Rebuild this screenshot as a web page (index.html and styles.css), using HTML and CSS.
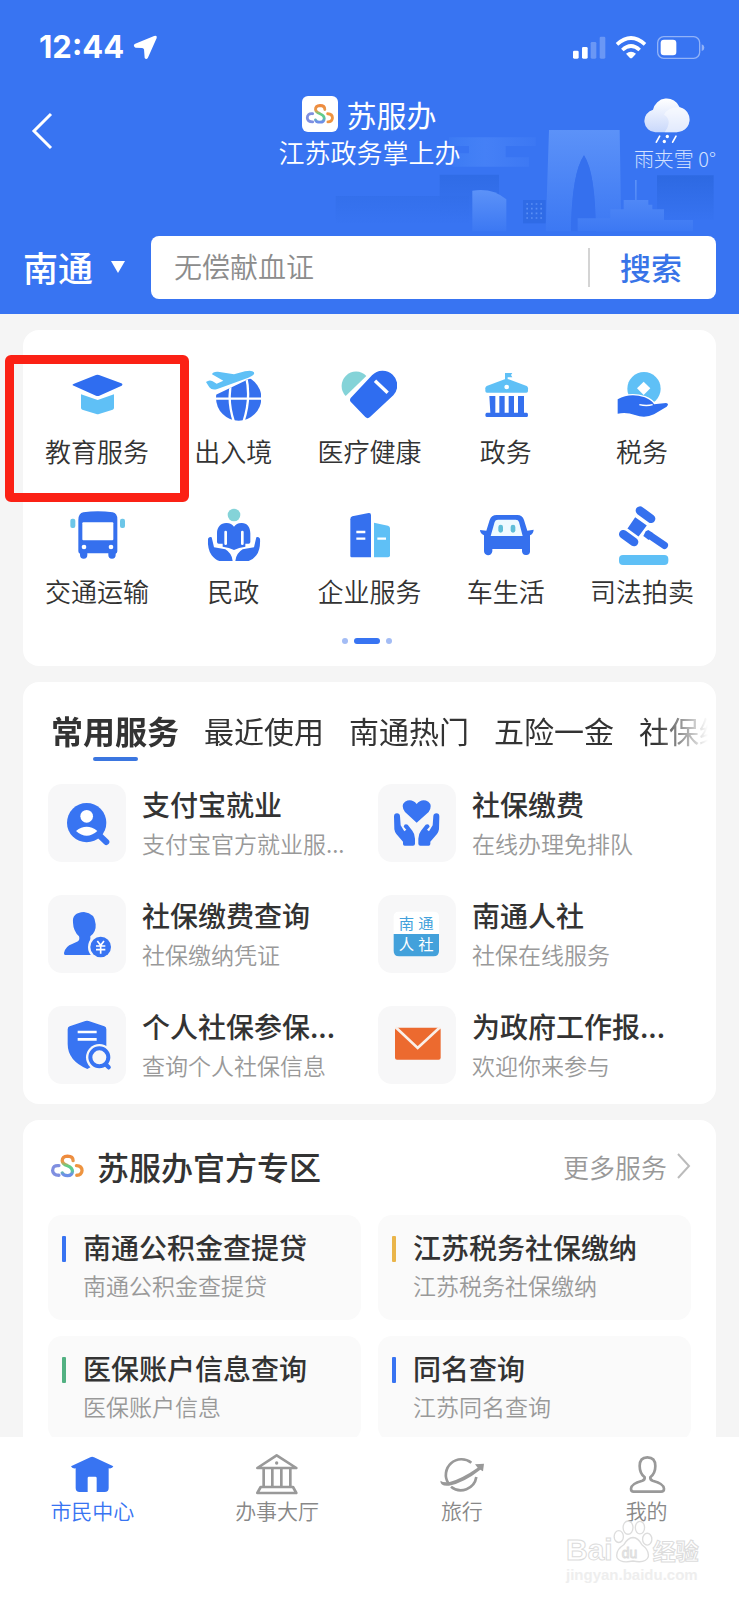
FILE: index.html
```html
<!DOCTYPE html>
<html lang="zh-CN">
<head>
<meta charset="utf-8">
<meta name="viewport" content="width=device-width, initial-scale=1">
<title>苏服办</title>
<link rel="stylesheet" href="styles.css">
</head>
<body>
<svg class="defs" width="0" height="0" aria-hidden="true">
  <defs>
    <linearGradient id="sGrad" gradientUnits="userSpaceOnUse" x1="0" y1="134" x2="0" y2="198">
      <stop offset="0" stop-color="#f0883a"/><stop offset=".3" stop-color="#e59a4c"/><stop offset=".5" stop-color="#5fcf86"/><stop offset=".72" stop-color="#5cc79a"/><stop offset=".9" stop-color="#6d8fe8"/>
    </linearGradient>
    <symbol id="logo" viewBox="150 128 106 76">
      <g fill="none" stroke-width="10" stroke-linecap="round">
        <path d="M177 165Q158 163 158 180Q159 194 177 194" stroke="#7f8fe0"/>
        <path d="M230 165Q247 166 247 180Q246 194 231 194" stroke="#ee9440"/>
        <path d="M220 150Q220 136 203 136Q187 137 187 150Q188 160 203 165Q218 171 218 182Q217 195 203 195Q190 195 187 187" stroke="url(#sGrad)"/>
      </g>
    </symbol>
  </defs>
</svg>
<div class="app">
  <main class="scroll">
    <header class="header">
      <svg class="skyline" viewBox="-117 390 1158 318" aria-hidden="true">
        <defs>
          <linearGradient id="b1" x1="0" y1="0" x2="0" y2="1"><stop offset="0" stop-color="#5c92f8"/><stop offset="1" stop-color="#3c78f3"/></linearGradient>
          <linearGradient id="b2" x1="0" y1="0" x2="0" y2="1"><stop offset="0" stop-color="#2d69e2"/><stop offset="1" stop-color="#3773f1"/></linearGradient>
          <linearGradient id="b3" x1="0" y1="0" x2="1" y2="0"><stop offset="0" stop-color="#478af8" stop-opacity="0"/><stop offset=".5" stop-color="#4580f6"/><stop offset="1" stop-color="#4580f6" stop-opacity=".3"/></linearGradient>
        </defs>
        <path d="M240 412H500V438H410V472H480V500H250V486H200V460H300V438H240Z" fill="url(#b3)"/>
        <path d="M-100 588H300V670H-100Z" fill="url(#b2)" opacity=".4"/>
        <path d="M212 524H390V660H212Z" fill="url(#b2)" opacity=".75"/>
        <path d="M310 572Q370 562 412 598V694H310Z" fill="url(#b1)"/>
        <path d="M462 600H530V670H462Z" fill="#2f6be6"/>
        <path d="M472 612H526M472 626H526M472 640H526M472 654H526" stroke="#5a8ff5" stroke-width="5" stroke-dasharray="5 9"/>
        <path d="M864 526H1034V660H864Z" fill="url(#b2)"/>
        <path d="M540 390H752L757 694H680Q680 520 645 466Q608 520 606 694H530Z" fill="url(#b1)"/>
        <path d="M645 466Q680 520 680 694H606Q608 520 645 466Z" fill="#3570ee"/>
        <path d="M626 655H724V628H764V600H798V540H803V600H838V614H850V628H885V660H972V694H626Z" fill="url(#b1)"/>
      </svg>
      <div class="status">
        <div class="clock"><span>12:44</span>
          <svg class="nav-arrow" viewBox="390 100 80 80" aria-hidden="true"><path d="M396 137Q394 133 400 130L458 106Q468 103 466 112L439 173Q434 180 429 174L427 148Q426 144 421 143L401 142Q397 141 396 137Z" fill="#fff"/></svg>
        </div>
        <svg class="status-icons" viewBox="606 96 402 84" aria-label="信号、无线网络与电量">
          <rect x="612" y="149" width="17" height="24" rx="4" fill="#fff"/><rect x="639" y="138" width="17" height="35" rx="4" fill="#fff"/>
          <rect x="665" y="123" width="17" height="50" rx="4" fill="#fff" opacity=".25"/><rect x="692" y="107" width="17" height="66" rx="4" fill="#fff" opacity=".25"/>
          <g fill="none" stroke="#fff" stroke-width="11"><path d="M744 130Q786 92 828 130"/><path d="M760 147Q786 123 812 147"/></g>
          <path d="M771 158Q786 146 801 158L790 170Q786 174 782 170Z" fill="#fff"/>
          <rect x="866" y="107" width="126" height="65" rx="18" fill="none" stroke="#fff" stroke-opacity=".45" stroke-width="4"/>
          <rect x="875" y="116" width="47" height="47" rx="10" fill="#fff"/><path d="M998 130Q1006 132 1006 140Q1006 148 998 150Z" fill="#fff" opacity=".45"/>
        </svg>
      </div>
      <div class="brand-row">
        <button class="back" type="button" aria-label="返回"><svg viewBox="0 0 22 38"><path d="M20 2L3 19L20 36" fill="none" stroke="#fff" stroke-width="3"/></svg></button>
        <div class="brand">
          <h1 class="brand-name"><span class="brand-tile"><svg><use href="#logo"/></svg></span>苏服办</h1>
          <p class="slogan">江苏政务掌上办</p>
        </div>
        <div class="weather">
          <svg viewBox="822 288 144 146" aria-hidden="true">
            <defs><linearGradient id="cl" x1="0" y1="0" x2="0" y2="1"><stop offset="0" stop-color="#fff"/><stop offset="1" stop-color="#c9d8fb"/></linearGradient></defs>
            <path d="M862 396a34 34 0 0 1-7-67a42 42 0 0 1 80-8a38 38 0 0 1-10 75Z" fill="url(#cl)"/>
            <path d="M888 344Q898 320 935 321a38 38 0 0 1-10 75H890Q915 360 888 344Z" fill="#fff" opacity=".45"/>
            <g stroke="#fff" stroke-width="5" stroke-linecap="round"><path d="M875 408L865 426M924 408L914 426"/></g>
            <circle cx="898" cy="409" r="5" fill="#fff"/><circle cx="889" cy="424" r="5" fill="#fff"/>
          </svg>
          <span>雨夹雪 0°</span>
        </div>
      </div>
      <form class="search-row">
        <button class="city" type="button">南通<svg viewBox="0 0 14 12" aria-hidden="true"><path d="M0 0H14L7 12Z" fill="#fff"/></svg></button>
        <div class="search">
          <input type="search" aria-label="搜索服务" placeholder="无偿献血证">
          <button class="search-btn" type="button">搜索</button>
        </div>
      </form>
    </header>

    <section class="card services" aria-label="服务分类">
      <div class="grid">
        <a class="cell highlighted" href="#"><svg viewBox="207 84 168 168"><path d="M218 136Q216 133 222 131L288 105Q292 103 297 105L364 130Q370 133 365 137L298 167Q293 169 288 167Z" fill="#2f6df0"/><path d="M243 163L293 180L342 163V203Q342 207 338 209L297 222Q293 224 289 222L247 209Q243 207 243 203Z" fill="#5fc0f6"/></svg><span>教育服务</span></a>
        <a class="cell" href="#"><svg viewBox="615 84 168 168"><clipPath id="gc"><path d="M640 168L745 118L800 100V260H640Z"/></clipPath><g clip-path="url(#gc)"><circle cx="716" cy="174" r="68" fill="#3570ee"/><g fill="none" stroke="#fff" stroke-width="7"><path d="M640 176H790M738 108Q754 175 730 246M698 108Q678 175 702 246"/></g></g><path d="M618 126Q628 118 638 124L650 131L670 122L636 103Q638 94 654 95L702 103L735 94Q756 89 762 97Q766 106 745 113L652 147Q636 152 628 142Z" fill="#5fc0f6"/></svg><span>出入境</span></a>
        <a class="cell" href="#"><svg viewBox="1023 84 168 168"><path d="M1037 168A42 42 0 1 1 1099 108Z" fill="#84d3d8"/><path d="M1052 185Q1048 180 1052 174L1116 106A43 43 0 0 1 1180 166L1110 231Q1103 238 1096 231Z" fill="#2f6df0"/><path d="M1125 122L1163 158" stroke="#fff" stroke-width="10"/></svg><span>医疗健康</span></a>
        <a class="cell" href="#"><svg viewBox="324 84 168 168"><path d="M405 99H427L423 105L427 112H413V121H405Z" fill="#5fc0f6"/><path d="M350 138L404 118Q410 116 416 118L470 138Q474 140 474 145V153Q474 158 469 158H351Q346 158 346 153V145Q346 140 350 138Z" fill="#5fc0f6"/><circle cx="410" cy="141" r="7" fill="#fff"/><path d="M358 168H376V218H388V168H404V218H416V168H432V218H444V168H462V218H470Q474 218 474 225T470 231H350Q346 231 346 225T350 218H361Z" fill="#3570ee"/></svg><span>政务</span></a>
        <a class="cell" href="#"><svg viewBox="732 84 168 168"><circle cx="822" cy="146" r="50" fill="#5fc0f6"/><path d="M821 125L841 145L821 165L801 145Z" fill="#fff"/><path d="M743 178Q780 157 824 172Q848 182 852 193L888 189Q899 191 890 200L852 223Q825 236 795 225Q770 216 743 221Z" fill="#2f6df0" stroke="#fff" stroke-width="8" paint-order="stroke"/><path d="M808 194Q830 199 848 194" fill="none" stroke="#fff" stroke-width="4"/></svg><span>税务</span></a>
        <a class="cell" href="#"><svg viewBox="207 504 168 168"><path d="M235 540Q235 520 250 517Q293 510 338 517Q352 520 352 538V634Q352 640 347 641V645a11 11 0 0 1-22 0V640H262V645a11 11 0 0 1-22 0V641Q235 640 235 634Z" fill="#3570ee"/><rect x="247" y="547" width="93" height="54" rx="3" fill="#fff"/><circle cx="252" cy="621" r="7" fill="#fff"/><circle cx="333" cy="621" r="7" fill="#fff"/><rect x="211" y="536" width="15" height="28" rx="6" fill="#6cc6e8"/><rect x="360" y="536" width="15" height="28" rx="6" fill="#6cc6e8"/></svg><span>交通运输</span></a>
        <a class="cell" href="#"><svg viewBox="615 504 168 168"><circle cx="702" cy="525" r="19" fill="#84d3d8"/><path d="M651 606V580C651 560 664 548 680 549Q695 550 702 560Q709 550 724 549C740 548 751 560 751 580V606Q751 611 746 611H736V620Q716 622 702 630Q688 622 668 620V611H656Q651 611 651 606Z" fill="#3570ee"/><path d="M677 576V611M727 576V611" stroke="#fff" stroke-width="8" stroke-linecap="round"/><g id="palm"><path d="M624 596Q628 588 635 592L642 622L676 628Q696 640 698 663H658Q646 660 635 646Q622 628 624 596Z" fill="#3570ee"/></g><use href="#palm" transform="matrix(-1 0 0 1 1404 0)"/></svg><span>民政</span></a>
        <a class="cell" href="#"><svg viewBox="1023 504 168 168"><path d="M1051 538Q1051 531 1057 529L1106 519Q1113 518 1113 526V652H1055Q1051 652 1051 648Z" fill="#3570ee"/><path d="M1122 548L1164 557Q1170 559 1170 565V646Q1170 652 1164 652H1122Z" fill="#5fc0f6"/><path d="M1069 576H1096M1069 596H1096M1132 596H1158" stroke="#fff" stroke-width="7"/></svg><span>企业服务</span></a>
        <a class="cell" href="#"><svg viewBox="324 504 168 168"><path d="M330 570L349 572L359 540Q364 525 380 525H442Q457 525 462 540L472 572L491 569Q490 582 480 586V632a12 12 0 0 1-24 2V627H367V634a12 12 0 0 1-25-2V586Q330 580 330 570Z" fill="#3570ee"/><path d="M374 546Q376 539 384 539H437Q445 539 447 546L458 588H362Z" fill="#eefaff"/><rect x="385" y="554" width="14" height="24" rx="7" fill="#5fbdd8"/><rect x="422" y="554" width="14" height="24" rx="7" fill="#5fbdd8"/></svg><span>车生活</span></a>
        <a class="cell" href="#"><svg class="gavel" viewBox="732 504 168 168"><g stroke="#3570ee" fill="none" stroke-width="26" stroke-linecap="round"><path d="M810 512L843 536M760 583L792 606"/><path d="M842 588L883 616" stroke-width="22"/></g><path d="M827 574L820 588L836 600L850 580L835 570Z" fill="#3570ee"/><path d="M795 528L834 556L806 593L769 566Z" fill="#3570ee" stroke="#fff" stroke-width="5"/><rect x="747" y="645" width="148" height="30" rx="12" fill="#5fc0f6"/></svg><span>司法拍卖</span></a>
      </div>
      <div class="dots"><i></i><i class="on"></i><i></i></div>
    </section>

    <section class="card common">
      <nav class="tabs" aria-label="服务分组">
        <a class="tab active" href="#">常用服务</a><a class="tab" href="#">最近使用</a><a class="tab" href="#">南通热门</a><a class="tab" href="#">五险一金</a><a class="tab" href="#">社保缴</a>
      </nav>
      <div class="list">
        <a class="item" href="#"><svg viewBox="144 312 234 234"><circle cx="260" cy="428" r="59" fill="#3874f2"/><circle cx="260" cy="409" r="19" fill="#fff"/><path d="M228 453Q260 428 292 453Q260 482 228 453Z" fill="#fff"/><path d="M300 468L319 486" stroke="#3874f2" stroke-width="18" stroke-linecap="round"/></svg><span class="txt"><b>支付宝就业</b><small>支付宝官方就业服...</small></span></a>
        <a class="item" href="#"><svg viewBox="27 312 234 234"><path d="M143 428L108 396Q94 376 108 365Q128 354 143 372Q158 354 178 365Q192 376 179 396Z" fill="#3874f2"/><g id="hold"><path d="M75 410Q75 400 84 400Q92 400 93 408L95 436L106 454L112 449L104 440Q106 430 116 434L130 452Q138 462 138 476V491Q138 497 132 497H107Q102 497 102 492V485L82 462Q77 455 76 448Z" fill="#3874f2"/></g><use href="#hold" transform="matrix(-1 0 0 1 286 0)"/></svg><span class="txt"><b>社保缴费</b><small>在线办理免排队</small></span></a>
        <a class="item" href="#"><svg viewBox="144 644 234 234"><path d="M219 727Q215 697 252 695Q285 698 287 732Q289 755 271 768V782L290 800V824H196Q191 824 192 818Q195 798 218 790L234 783Q240 778 237 768Q220 752 219 727Z" fill="#3874f2"/><circle cx="302" cy="800" r="38" fill="#f7f7f8"/><circle cx="302" cy="800" r="31" fill="#3874f2"/><path d="M292 782L302 795L312 782M302 795V820M288 797H316M288 808H316" fill="none" stroke="#fff" stroke-width="5"/></svg><span class="txt"><b>社保缴费查询</b><small>社保缴纳凭证</small></span></a>
        <a class="item" href="#"><svg class="nantong" viewBox="27 644 234 234"><rect x="74" y="694" width="136" height="134" rx="14" fill="#fff"/><path d="M74 761H210V812Q210 828 194 828H90Q74 828 74 812Z" fill="#43a1db"/><text x="89" y="747" fill="#43a1db">南</text><text x="148" y="747" fill="#43a1db">通</text><text x="89" y="809" fill="#fff">人</text><text x="148" y="809" fill="#fff">社</text></svg><span class="txt"><b>南通人社</b><small>社保在线服务</small></span></a>
        <a class="item" href="#"><svg viewBox="144 976 234 234"><path d="M203 1046Q203 1039 209 1037L256 1021Q261 1019 266 1021L313 1037Q319 1039 319 1046V1096Q310 1140 262 1165Q203 1140 203 1090Z" fill="#3874f2"/><path d="M233 1054H290M233 1076H290" stroke="#fff" stroke-width="8"/><circle cx="298" cy="1130" r="40" fill="#f7f7f8"/><path d="M316 1150L326 1160" stroke="#3874f2" stroke-width="13" stroke-linecap="round"/><circle cx="298" cy="1130" r="27" fill="#f7f7f8" stroke="#3874f2" stroke-width="12"/></svg><span class="txt"><b>个人社保参保...</b><small>查询个人社保信息</small></span></a>
        <a class="item" href="#"><svg viewBox="27 976 234 234"><rect x="78" y="1041" width="137" height="96" rx="6" fill="#ec6a2f"/><path d="M80 1040L146 1102L213 1040" fill="none" stroke="#f9efe9" stroke-width="8"/></svg><span class="txt"><b>为政府工作报...</b><small>欢迎你来参与</small></span></a>
      </div>
    </section>

    <section class="card zone">
      <div class="zone-head">
        <svg class="zone-logo" aria-hidden="true"><use href="#logo"/></svg>
        <h2>苏服办官方专区</h2>
        <a class="more" href="#">更多服务<svg viewBox="0 0 14 26" aria-hidden="true"><path d="M1 1L12 13L1 25" fill="none" stroke="#bbb" stroke-width="2"/></svg></a>
      </div>
      <div class="tiles">
        <a class="tile blue" href="#"><b>南通公积金查提贷</b><small>南通公积金查提贷</small></a>
        <a class="tile yellow" href="#"><b>江苏税务社保缴纳</b><small>江苏税务社保缴纳</small></a>
        <a class="tile green" href="#"><b>医保账户信息查询</b><small>医保账户信息</small></a>
        <a class="tile blue" href="#"><b>同名查询</b><small>江苏同名查询</small></a>
      </div>
    </section>
  </main>

  <nav class="tabbar" aria-label="主导航">
    <a class="nav-item current" href="#"><svg viewBox="211 66 132 132"><path d="M272 82Q277 79 283 82L341 109Q338 117 327 115V174Q327 186 315 186H291V144Q291 140 287 140H268Q264 140 264 144V186H240Q228 186 228 174V115Q217 117 214 109Z" fill="#3874f2"/></svg>市民中心</a>
    <a class="nav-item" href="#"><svg viewBox="765 66 132 132"><g fill="none" stroke="#999" stroke-width="8" stroke-linejoin="round"><path d="M772 114L830 76L889 114Z"/><path d="M791 117V170M817 117V170M844 117V170M871 117V170"/><path d="M782 171H879L889 189H772Z"/></g><circle cx="830" cy="99" r="5" fill="#999"/></svg>办事大厅</a>
    <a class="nav-item" href="#"><svg viewBox="213 66 132 132"><g fill="none" stroke="#999" stroke-width="8"><path d="M307 98A47 47 0 0 0 238 160M246 170A47 47 0 0 0 322 141"/></g><path d="M214 152Q222 158 242 156Q280 145 326 113L318 103L345 101L342 124L334 119Q285 158 240 167Q214 170 214 152Z" fill="#999"/></svg>旅行</a>
    <a class="nav-item" href="#"><svg viewBox="767 66 132 132"><path d="M826 142Q811 130 811 108Q811 82 834 82Q858 82 858 108Q858 130 843 142Q842 149 850 152Q884 161 884 176Q884 185 875 185H793Q785 185 785 176Q785 161 819 152Q827 149 826 142Z" fill="none" stroke="#999" stroke-width="8"/></svg>我的</a>
    <div class="watermark">
      <div class="wm-top"><span>Bai</span><svg viewBox="728 270 120 130"><g fill="#fff" stroke="#ddd" stroke-width="4"><ellipse cx="745" cy="320" rx="14" ry="18"/><ellipse cx="773" cy="293" rx="15" ry="20"/><ellipse cx="809" cy="293" rx="14" ry="19"/><ellipse cx="831" cy="328" rx="14" ry="18"/><path d="M788 323Q804 324 815 345Q838 362 834 382Q826 402 788 394Q750 402 740 384Q734 362 760 345Q772 324 788 323Z"/></g><text x="754" y="385">du</text></svg><span class="wm-cn">经验</span></div>
      <div class="wm-url">jingyan.baidu.com</div>
    </div>
  </nav>
</div>
</body>
</html>
```
FILE: styles.css
```css
* { box-sizing: border-box; }
body {
  margin: 0;
  background: #f5f5f5;
  color: #333;
  font-family: "Noto Sans CJK SC", sans-serif;
}
h1, h2, p { margin: 0; }
a { color: inherit; text-decoration: none; }
button {
  padding: 0;
  border: 0;
  background: none;
  color: inherit;
  font: inherit;
  cursor: pointer;
}
svg { display: block; flex: none; }
.defs { position: absolute; }

.app { display: flex; flex-direction: column; height: 100vh; }
.scroll {
  flex: 1;
  min-height: 0;
  overflow-y: auto;
  scrollbar-width: none;
}

/* Header */
.header {
  position: relative;
  padding: 30px 23px 15px;
  background: #3874f2;
  color: #fff;
}
.skyline { position: absolute; right: 23px; top: 130px; width: 386px; height: 106px; }
.status {
  display: flex;
  align-items: center;
  justify-content: space-between;
  height: 34px;
  padding: 0 11px 0 16px;
}
.clock {
  display: flex;
  align-items: center;
  gap: 8px;
  font: 700 31px/34px Inter, sans-serif;
}
.nav-arrow { width: 26px; height: 26px; }
.status-icons { width: 134px; height: 28px; }
.brand-row {
  position: relative;
  display: grid;
  grid-template-columns: 1fr auto 1fr;
  height: 172px;
  padding-top: 32px;
}
.back { align-self: start; justify-self: start; margin: 16px 0 0 8px; }
.back svg { width: 22px; height: 38px; }
.brand { text-align: center; }
.brand-name {
  display: flex;
  align-items: center;
  justify-content: center;
  gap: 8px;
  height: 36px;
  font-size: 30px;
  font-weight: 400;
  line-height: 32px;
}
.brand-tile {
  display: flex;
  align-items: center;
  justify-content: center;
  width: 36px;
  height: 36px;
  border-radius: 6px;
  background: #fff;
}
.brand-tile svg { width: 30px; height: 22px; }
.slogan { margin-top: 3px; font-size: 26px; font-weight: 350; line-height: 34px; }
.weather {
  display: flex;
  flex-direction: column;
  align-items: center;
  justify-self: end;
  align-self: start;
  font-size: 20px;
  font-weight: 300;
  line-height: 28px;
  color: #d3e1ff;
}
.weather svg { width: 48px; height: 49px; margin: 0 18px 0 0; }
.search-row { position: relative; display: flex; align-items: center; }
.city {
  display: flex;
  align-items: center;
  gap: 18px;
  width: 128px;
  font-size: 35px;
  font-weight: 500;
  line-height: 48px;
  padding-bottom: 2px;
}
.city svg { width: 14px; height: 12px; }
.search {
  display: flex;
  flex: 1;
  align-items: center;
  min-width: 0;
  height: 63px;
  border-radius: 8px;
  background: #fff;
}
.search input {
  flex: 1;
  min-width: 0;
  height: 100%;
  padding: 0 24px 3px 23px;
  border: 0;
  outline: 0;
  background: none;
  font: 350 28px "Noto Sans CJK SC", sans-serif;
}
.search input::placeholder { color: #8c8c8c; opacity: 1; }
.search-btn {
  width: 128px;
  height: 39px;
  border-left: 2px solid #d4d4d4;
  padding: 0 4px 2px 0;
  color: #3874e8;
  font-size: 31px;
  font-weight: 500;
  line-height: 37px;
}

/* Cards */
.card { margin: 16px 23px 0; border-radius: 16px; background: #fff; }

.services { padding: 38px 6px 22px; }
.grid { display: grid; grid-template-columns: repeat(5, 1fr); row-gap: 40px; }
.cell {
  position: relative;
  display: flex;
  flex-direction: column;
  align-items: center;
  gap: 10px;
  font-size: 26px;
  font-weight: 350;
  line-height: 34px;
}
.cell svg { width: 56px; height: 56px; }
.cell .gavel { overflow: visible; }
.highlighted::after {
  content: "";
  position: absolute;
  inset: -13px -24px -34px;
  border: 9px solid #fb2115;
  border-radius: 6px;
}
.dots { display: flex; justify-content: center; gap: 6px; margin-top: 30px; padding-right: 6px; }
.dots i { width: 6px; height: 6px; border-radius: 3px; background: #a3bcf5; }
.dots .on { width: 26px; background: #3874f2; }

.common { padding: 28px 8px 20px 25px; }
.tabs {
  display: flex;
  gap: 25px;
  height: 51px;
  margin-left: 3px;
  overflow: hidden;
  white-space: nowrap;
  font-size: 30px;
  line-height: 40px;
  -webkit-mask-image: linear-gradient(to left, transparent 0, #000 52px);
  mask-image: linear-gradient(to left, transparent 0, #000 52px);
}
.tab { flex: none; }
.tab.active { position: relative; font-size: 32px; font-weight: 700; }
.tab.active::after {
  content: "";
  position: absolute;
  left: 42px;
  right: 41px;
  bottom: 0;
  height: 4px;
  border-radius: 2px;
  background: #3b76e0;
}
.list {
  display: grid;
  grid-template-columns: 1fr 1fr;
  gap: 33px 17px;
  margin-top: 23px;
  padding-right: 17px;
}
.item { display: flex; gap: 16px; min-width: 0; }
.item svg { width: 78px; height: 78px; border-radius: 14px; background: #f7f7f8; }
.nantong text { font: 46px "Noto Sans CJK SC", sans-serif; }
.txt { display: flex; flex-direction: column; min-width: 0; white-space: nowrap; }
b { font-size: 28px; font-weight: 500; line-height: 40px; }
small { color: #999; font-size: 23px; font-weight: 350; line-height: 38px; }

.zone { padding: 23px 25px 20px; }
.zone-head { display: flex; align-items: center; height: 46px; }
.zone-logo { width: 35px; height: 26px; margin-left: 2px; }
.zone-head h2 { margin-left: 12px; font-size: 32px; font-weight: 500; line-height: 46px; }
.more {
  display: flex;
  align-items: center;
  gap: 10px;
  margin-left: auto;
  color: #999;
  font-size: 26px;
  font-weight: 350;
}
.more svg { width: 14px; height: 26px; }
.tiles {
  display: grid;
  grid-template-columns: 1fr 1fr;
  gap: 16px 17px;
  margin-top: 26px;
}
.tile {
  position: relative;
  display: flex;
  flex-direction: column;
  height: 105px;
  padding: 12px 0 0 35px;
  border-radius: 14px;
  background: #fafafa;
  white-space: nowrap;
}
.tile small { line-height: 36px; }
.tile::before {
  content: "";
  position: absolute;
  left: 14px;
  top: 21px;
  width: 4px;
  height: 26px;
  border-radius: 1px;
  background: #3874f2;
}
.tile.yellow::before { background: #eab54a; }
.tile.green::before { background: #52b182; }

/* Bottom navigation */
.tabbar {
  position: relative;
  display: grid;
  grid-template-columns: repeat(4, 1fr);
  height: 163px;
  padding-top: 15px;
  background: #fff;
}
.nav-item {
  display: flex;
  flex-direction: column;
  align-items: center;
  color: #888;
  font-size: 21px;
  font-weight: 350;
  line-height: 28px;
}
.nav-item svg { width: 44px; height: 44px; }
.nav-item.current { color: #3874f2; }

.watermark {
  position: absolute;
  right: 40px;
  top: 83px;
  width: 133px;
  color: #fff;
  font-family: "Liberation Sans", sans-serif;
  font-weight: 700;
  -webkit-text-stroke: 1px #dcdcdc;
}
.wm-top { display: flex; align-items: flex-end; font-size: 30px; line-height: 26px; }
.wm-top svg { width: 40px; height: 43px; }
.wm-top text { font-size: 42px; font-weight: 400; fill: #fff; stroke: #ddd; stroke-width: 3px; }
.wm-cn { font-family: "Noto Sans CJK SC", sans-serif; font-size: 23px; }
.wm-url { font-size: 15px; line-height: 24px; color: #eee; -webkit-text-stroke: 0; }
```
